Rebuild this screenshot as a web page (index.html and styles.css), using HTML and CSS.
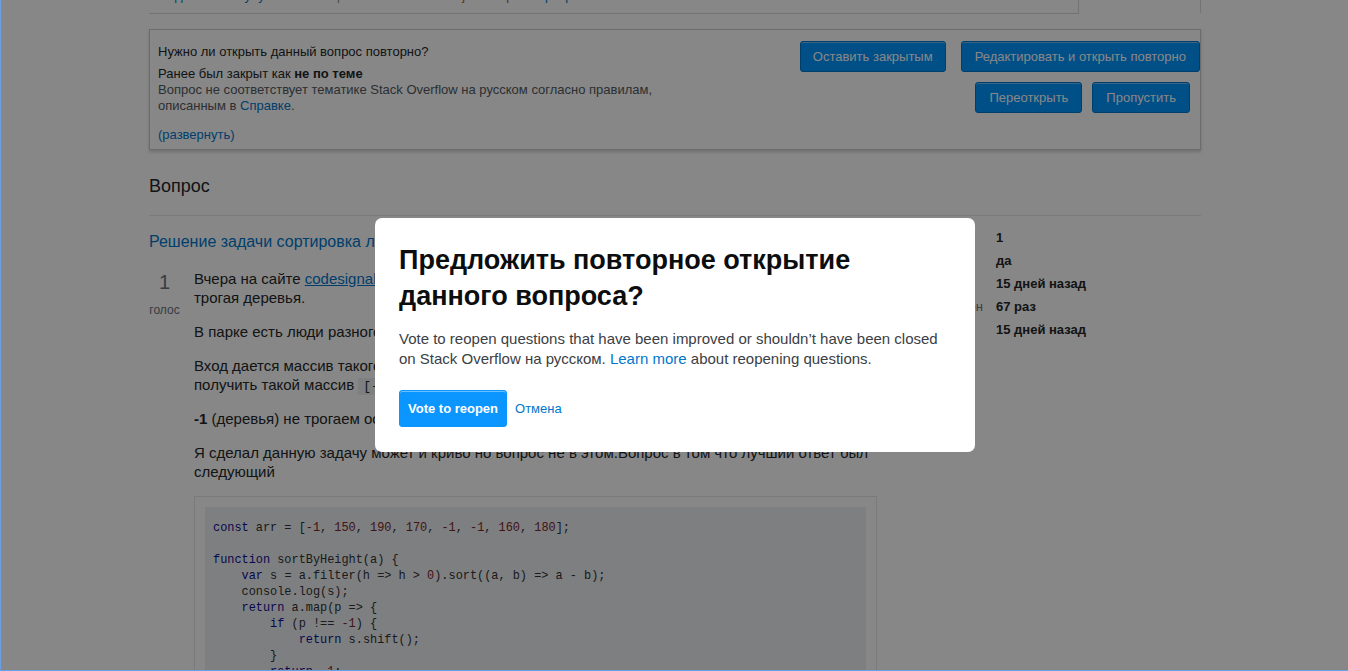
FILE: index.html
```html
<!DOCTYPE html>
<html lang="ru">
<head>
<meta charset="utf-8">
<title>Очередь повторного открытия</title>
<link rel="stylesheet" href="styles.css">
</head>
<body>
<div class="page">
  <div class="top-row">
    <div class="prev-box">
      <div class="prev-links">
        <a class="lnk">поделиться</a>
        <a class="lnk">улучшить</a>
        <span class="muted">вопрос</span>
        <a class="lnk">отслеживать</a>
        <span class="tag-tip">javascript</span>
        <a class="lnk">сортировка</a>
      </div>
    </div>
    <div class="top-side"></div>
  </div>

  <div class="review-box">
    <div class="review-info">
      <p class="q-ask">Нужно ли открыть данный вопрос повторно?</p>
      <p class="q-reason">Ранее был закрыт как <b>не по теме</b><br>
        <span class="reason-text">Вопрос не соответствует тематике Stack Overflow на русском согласно правилам, описанным в <a class="lnk">Справке</a>.</span></p>
      <a class="lnk expand">(развернуть)</a>
    </div>
    <div class="review-actions">
      <div class="action-row">
        <button class="btn">Оставить закрытым</button>
        <button class="btn wide">Редактировать и открыть повторно</button>
      </div>
      <div class="action-row second">
        <button class="btn">Переоткрыть</button>
        <button class="btn">Пропустить</button>
      </div>
    </div>
  </div>

  <h2 class="section-title">Вопрос</h2>

  <div class="question">
    <div class="q-main">
      <a class="q-title">Решение задачи сортировка людей по росту</a>
      <div class="post">
        <div class="votecell">
          <div class="vote-count">1</div>
          <div class="vote-label">голос</div>
        </div>
        <div class="postcell">
          <p>Вчера на сайте <a class="ulink">codesignal.com</a> наткнулся на задачу: отсортировать людей по росту, не<br>трогая деревья.</p>
          <p>В парке есть люди разного роста, и между ними растут деревья.</p>
          <p>Вход дается массив такого вида <code>[-1, 150, 190, 170, -1, -1, 160, 180]</code>, нужно<br>получить такой массив <code>[-1, 150, 160, 170, -1, -1, 180, 190]</code></p>
          <p><b>-1</b> (деревья) не трогаем остаются на своих местах.</p>
          <p>Я сделал данную задачу может и криво но вопрос не в этом.Вопрос в том что лучший ответ был следующий</p>
          <div class="snippet">
<pre class="code"><span class="kw">const</span> arr = [<span class="num">-1</span>, <span class="num">150</span>, <span class="num">190</span>, <span class="num">170</span>, <span class="num">-1</span>, <span class="num">-1</span>, <span class="num">160</span>, <span class="num">180</span>];

<span class="kw">function</span> sortByHeight(a) {
    <span class="kw">var</span> s = a.filter(h =&gt; h &gt; <span class="num">0</span>).sort((a, b) =&gt; a - b);
    console.log(s);
    <span class="kw">return</span> a.map(p =&gt; {
        <span class="kw">if</span> (p !== <span class="num">-1</span>) {
            <span class="kw">return</span> s.shift();
        }
        <span class="kw">return</span> <span class="num">-1</span>;
    });
}</pre>
          </div>
        </div>
      </div>
    </div>
    <div class="q-stats">
      <div class="st-labels">
        <div class="st-labels-inner">
          <div class="st-label">Голосов</div>
          <div class="st-label">Закрыт</div>
          <div class="st-label">Задан</div>
          <div class="st-label">Просмотрен</div>
          <div class="st-label">Изменён</div>
        </div>
      </div>
      <div class="st-values">
        <div class="st-val">1</div>
        <div class="st-val">да</div>
        <div class="st-val">15 дней назад</div>
        <div class="st-val">67 раз</div>
        <div class="st-val">15 дней назад</div>
      </div>
    </div>
  </div>
</div>

<div class="overlay">
  <div class="modal" role="dialog">
    <h1 class="modal-title">Предложить повторное открытие данного вопроса?</h1>
    <p class="modal-text">Vote to reopen questions that have been improved or shouldn’t have been closed on Stack Overflow на русском. <a class="mlink">Learn more</a> about reopening questions.</p>
    <div class="modal-actions">
      <button class="btn-primary">Vote to reopen</button>
      <a class="cancel">Отмена</a>
    </div>
  </div>
</div>
<div class="frame"></div>
</body>
</html>
```

FILE: styles.css
```css
html, body {
  margin: 0;
  height: 100%;
  overflow: hidden;
}
body {
  font-family: "Liberation Sans", Arial, sans-serif;
  color: #242729;
  background: #fff;
}
p { margin: 0; }
a { cursor: pointer; }

.page {
  width: 1052px;
  margin-left: 149px;
}

/* top cut-off row */
.top-row {
  display: flex;
  height: 14px;
}
.prev-box {
  width: 930px;
  box-sizing: border-box;
  border-right: 1px solid #d6d9dc;
  border-bottom: 1px solid #d6d9dc;
  overflow: hidden;
}
.prev-links {
  margin-top: -11px;
  padding-left: 12px;
  display: flex;
  gap: 14px;
  font-size: 13px;
  line-height: 13px;
}
.prev-links .muted { color: #9199a1; }
.prev-links .tag-tip { color: #c15b10; }
.top-side {
  flex: 1;
  height: 13px;
  border-right: 1px solid #d6d9dc;
}

.lnk { color: #07c; text-decoration: none; }

/* review box */
.review-box {
  margin-top: 15px;
  height: 121px;
  box-sizing: border-box;
  border: 1px solid #c8ccd0;
  box-shadow: 0 2px 3px rgba(0, 0, 0, 0.18);
  display: flex;
  justify-content: space-between;
}
.review-info {
  padding: 14px 0 0 8px;
  width: 520px;
  font-size: 13px;
  line-height: 16px;
}
.q-ask { margin-bottom: 6px; }
.q-reason b { font-weight: bold; }
.reason-text { color: #535a60; }
.expand { display: inline-block; margin-top: 13px; }

.review-actions {
  padding-top: 11px;
  display: flex;
  flex-direction: column;
  align-items: flex-end;
  gap: 10px;
}
.action-row {
  display: flex;
  gap: 15px;
}
.action-row.second {
  gap: 10px;
  margin-right: 10px;
}
.btn {
  height: 31px;
  padding: 0 12px;
  font-family: "Liberation Sans", Arial, sans-serif;
  font-size: 13px;
  color: #fff;
  background: #0095ff;
  border: 1px solid #07c;
  border-radius: 3px;
  box-shadow: inset 0 1px 0 #66bfff;
}
.btn.wide {
  padding: 0 13px;
}
.action-row.second .btn {
  padding: 0 13px;
}

/* section */
.section-title {
  margin: 24px 0 0;
  padding-bottom: 17px;
  border-bottom: 1px solid #e4e6e8;
  font-size: 18px;
  font-weight: normal;
  line-height: 24px;
}

.question {
  margin-top: 10px;
  display: flex;
}
.q-main {
  width: 728px;
}
.q-title {
  display: block;
  margin-top: 5px;
  font-size: 16px;
  line-height: 21px;
  color: #07c;
}

.post {
  margin-top: 17px;
  display: flex;
}
.votecell {
  width: 31px;
  margin-right: 14px;
  text-align: center;
  color: #6a737c;
}
.vote-count {
  margin-top: 1px;
  font-size: 20px;
  line-height: 24px;
}
.vote-label {
  margin-top: 8px;
  font-size: 12px;
  line-height: 16px;
}
.postcell {
  width: 683px;
  font-size: 15px;
  line-height: 19px;
}
.postcell p { margin-bottom: 15px; }
.ulink { color: #07c; text-decoration: underline; }
.postcell code {
  font-family: "Liberation Mono", "DejaVu Sans Mono", monospace;
  font-size: 13px;
  line-height: 1;
  background: #eff0f1;
  padding: 1px 5px;
}

.snippet {
  margin-top: 2px;
  border: 1px solid #e4e6e8;
  padding: 10px;
}
.code {
  margin: 0;
  padding: 13px 8px 12px;
  background: #eff0f1;
  font-family: "Liberation Mono", "DejaVu Sans Mono", monospace;
  font-size: 11.9px;
  line-height: 16px;
  color: #303336;
}
.kw { color: #101094; }
.num { color: #7d2727; }

.q-stats {
  display: flex;
  font-size: 13px;
  line-height: 23px;
}
.st-labels {
  width: 119px;
  padding-right: 13px;
  box-sizing: border-box;
  display: flex;
  justify-content: flex-end;
}
.st-label { color: #6a737c; white-space: nowrap; }
.st-val { font-weight: bold; color: #242729; white-space: nowrap; }

/* overlay + modal */
.overlay {
  position: fixed;
  inset: 0;
  padding: 0 0 1px 2px;
  background: rgba(0, 0, 0, 0.47);
  display: flex;
  align-items: center;
  justify-content: center;
}
.modal {
  width: 600px;
  box-sizing: border-box;
  background: #fff;
  border-radius: 7px;
  padding: 24px 24px 25px;
}
.modal-title {
  margin: 0 0 15px;
  font-size: 27px;
  line-height: 36px;
  font-weight: bold;
  color: #0c0d0e;
}
.modal-text {
  font-size: 15px;
  line-height: 19.5px;
  color: #3b4045;
}
.mlink { color: #0077cc; }
.modal-actions {
  margin-top: 22px;
  display: flex;
  align-items: center;
  gap: 8px;
}
.btn-primary {
  height: 37px;
  padding: 0 8px;
  font-family: "Liberation Sans", Arial, sans-serif;
  font-size: 13px;
  font-weight: bold;
  color: #fff;
  background: #0a95ff;
  border: 1px solid #0a95ff;
  border-radius: 3px;
  box-shadow: inset 0 1px 0 rgba(255, 255, 255, 0.4);
}
.cancel {
  font-size: 13px;
  color: #0077cc;
}

.frame {
  position: fixed;
  inset: 0;
  border-left: 1px solid #6b9fe3;
  border-bottom: 1px solid #6b9fe3;
  pointer-events: none;
}
```
